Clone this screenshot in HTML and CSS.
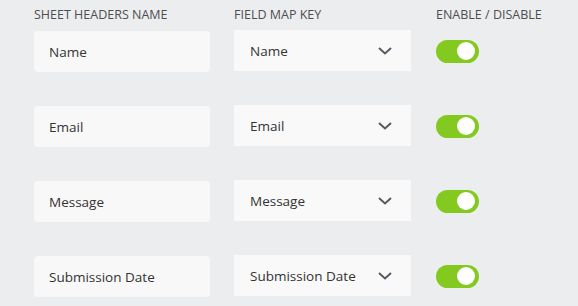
FILE: index.html
```html
<!DOCTYPE html>
<html lang="en">
<head>
    <meta charset="UTF-8">
    <meta name="viewport" content="width=device-width, initial-scale=1.0">
    <title>Field Mapping</title>
    <link rel="stylesheet" href="styles.css">
</head>
<body>
    <div class="mapping">
        <div class="mapping-head">
            <span>Sheet Headers Name</span>
            <span>Field Map Key</span>
            <span>Enable / Disable</span>
        </div>

        <div class="mapping-row">
            <input type="text" class="sheet-name" value="Name">
            <div class="field-select">
                <span>Name</span>
                <svg class="chevron" viewBox="0 0 14 8" width="14" height="8"><path d="M1 1l6 5.5L13 1" fill="none" stroke="#545a63" stroke-width="2"/></svg>
            </div>
            <label class="switch"><input type="checkbox" checked><span class="slider"></span></label>
        </div>

        <div class="mapping-row">
            <input type="text" class="sheet-name" value="Email">
            <div class="field-select">
                <span>Email</span>
                <svg class="chevron" viewBox="0 0 14 8" width="14" height="8"><path d="M1 1l6 5.5L13 1" fill="none" stroke="#545a63" stroke-width="2"/></svg>
            </div>
            <label class="switch"><input type="checkbox" checked><span class="slider"></span></label>
        </div>

        <div class="mapping-row">
            <input type="text" class="sheet-name" value="Message">
            <div class="field-select">
                <span>Message</span>
                <svg class="chevron" viewBox="0 0 14 8" width="14" height="8"><path d="M1 1l6 5.5L13 1" fill="none" stroke="#545a63" stroke-width="2"/></svg>
            </div>
            <label class="switch"><input type="checkbox" checked><span class="slider"></span></label>
        </div>

        <div class="mapping-row">
            <input type="text" class="sheet-name" value="Submission Date">
            <div class="field-select">
                <span>Submission Date</span>
                <svg class="chevron" viewBox="0 0 14 8" width="14" height="8"><path d="M1 1l6 5.5L13 1" fill="none" stroke="#545a63" stroke-width="2"/></svg>
            </div>
            <label class="switch"><input type="checkbox" checked><span class="slider"></span></label>
        </div>
    </div>
</body>
</html>
```

FILE: styles.css
```css
body {
    font-family: 'Open Sans', 'Noto Sans', sans-serif;
    background-color: #ecedef;
    margin: 0;
    color: #333;
}
.mapping {
    padding: 7px 0 0 34px;
}
.mapping-head,
.mapping-row {
    display: grid;
    grid-template-columns: 176px 177px 44px;
    column-gap: 24px;
}
.mapping-head {
    height: 16px;
    margin-bottom: 7px;
    font-size: 12.5px;
    line-height: 16px;
    text-transform: uppercase;
    white-space: nowrap;
    color: #4e4e50;
}
.mapping-head span:last-child {
    margin-left: 1px;
}
.mapping-row {
    align-items: start;
    margin-bottom: 33px;
}
.sheet-name {
    margin: 1px 0 0;
    height: 41px;
    padding: 0 15px;
    border: none;
    border-radius: 4px;
    background-color: #f8f8f8;
    font-family: inherit;
    font-size: 13.5px;
    color: #333;
    box-sizing: border-box;
    width: 100%;
    outline: none;
}
.field-select {
    height: 41px;
    padding: 0 19px 0 16px;
    background-color: #f9f9f9;
    display: flex;
    justify-content: space-between;
    align-items: center;
    font-size: 13.5px;
    box-sizing: border-box;
}
.chevron {
    display: block;
}
.switch {
    align-self: center;
    margin: 0 0 0 1px;
    position: relative;
    display: block;
    width: 43px;
    height: 23px;
}
.switch input {
    display: none;
}
.slider {
    position: absolute;
    inset: 0;
    border-radius: 12px;
    background-color: #84c91f;
    cursor: pointer;
}
.slider::before {
    content: '';
    position: absolute;
    top: 2.5px;
    right: 4px;
    width: 18px;
    height: 18px;
    border-radius: 50%;
    background-color: #fff;
}
```
